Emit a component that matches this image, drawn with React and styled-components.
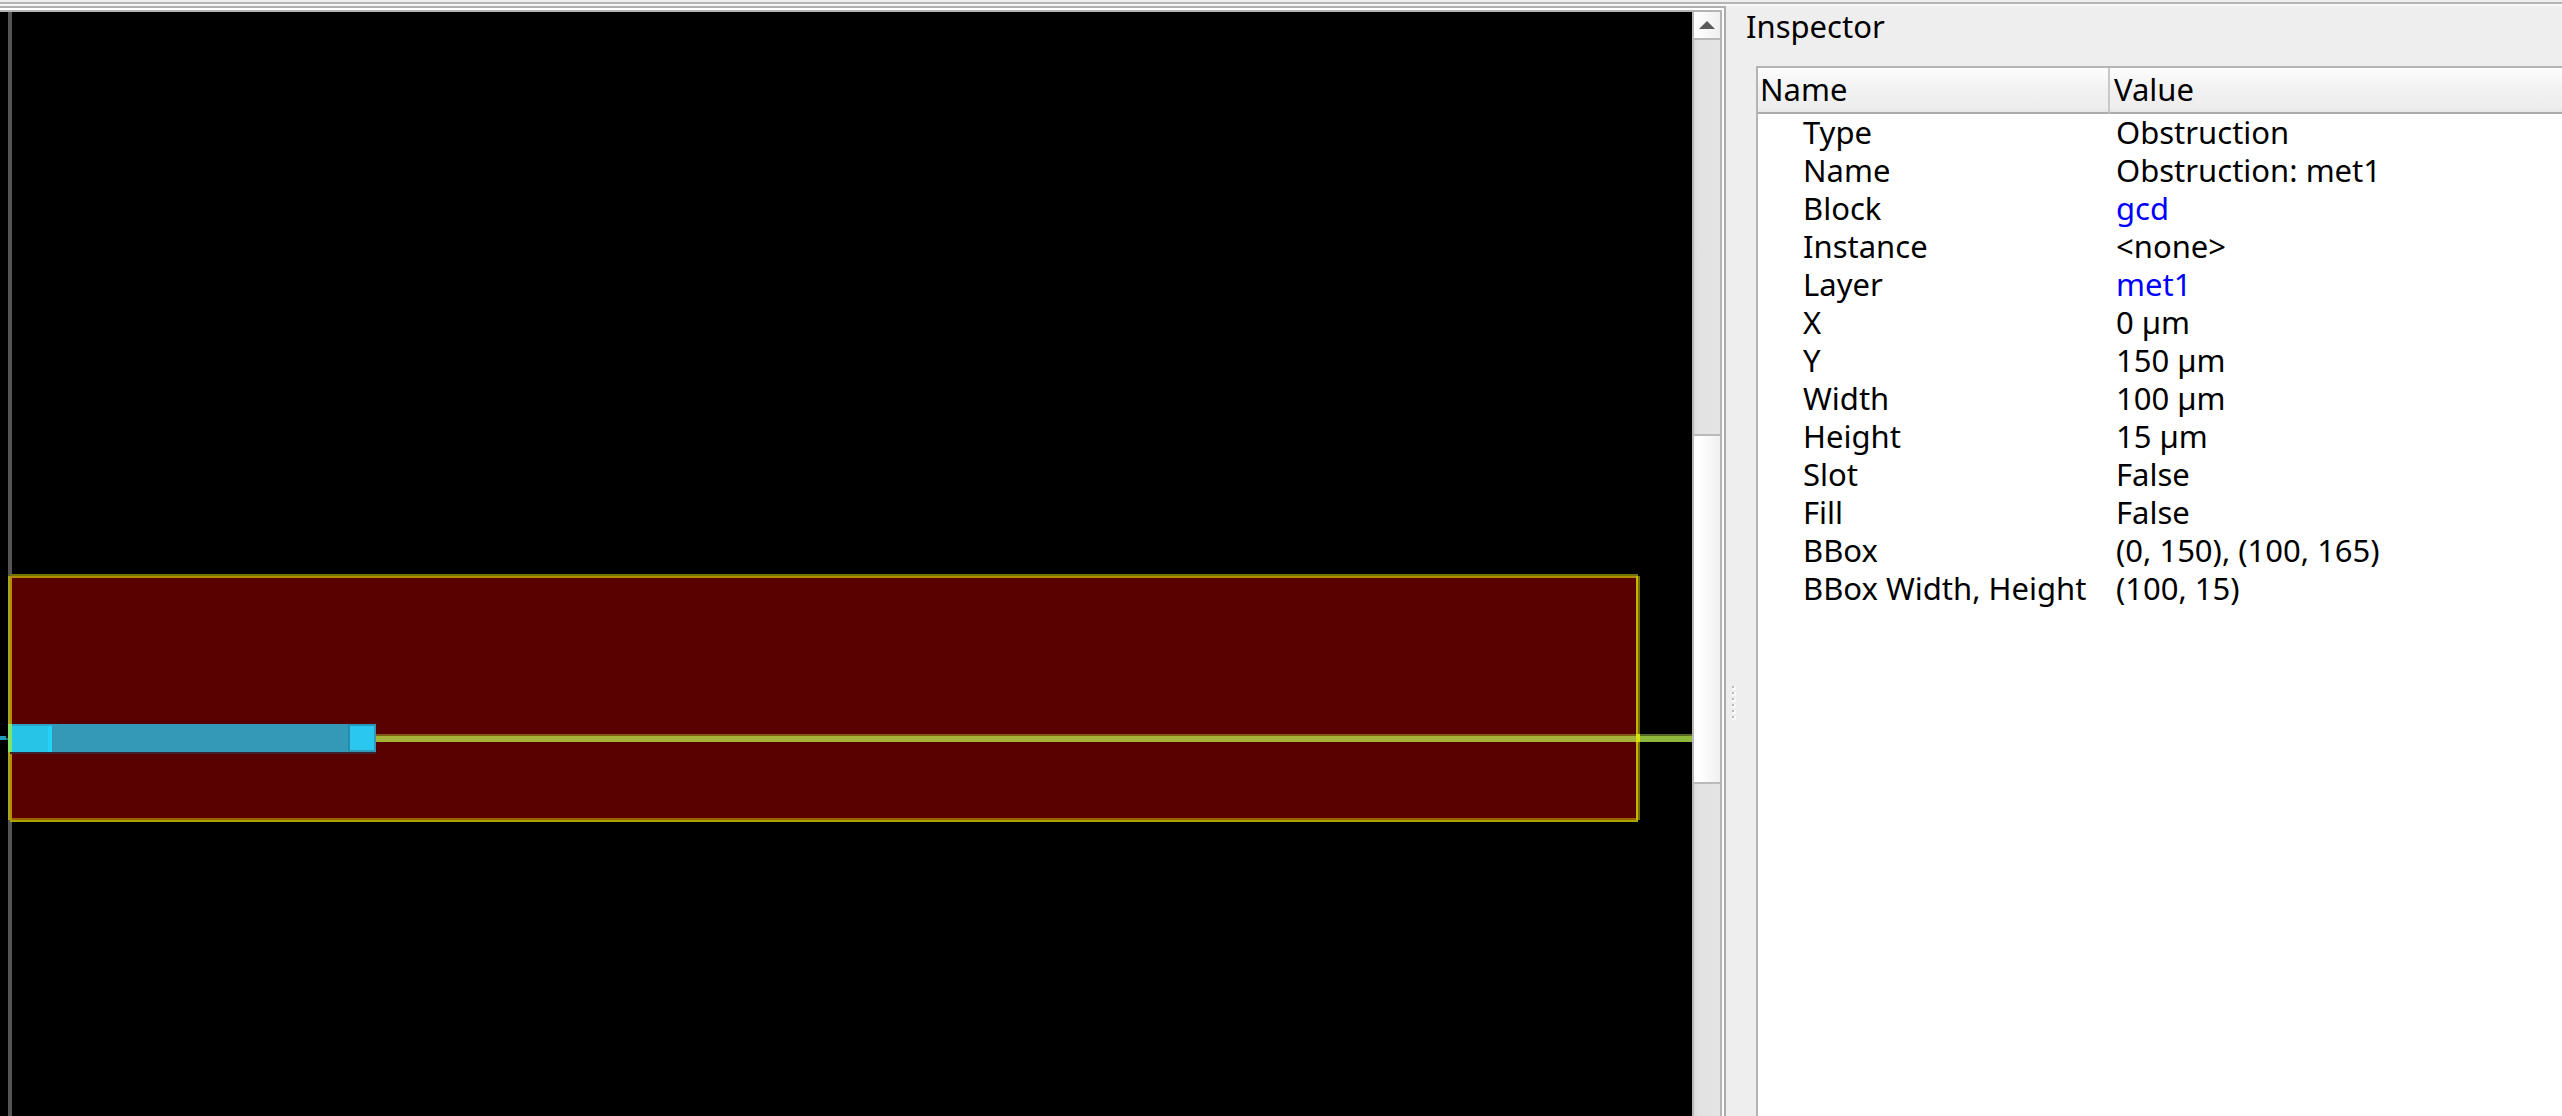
import React from 'react';
import styled, { createGlobalStyle } from 'styled-components';

const GlobalStyle = createGlobalStyle`
  * { box-sizing: border-box; }
  body {
    margin: 0;
    background: #eeeeee;
    color: #000000;
    font-family: "Noto Sans", "Open Sans", sans-serif;
    font-size: 31px;
  }
`;

const Window = styled.div`
  display: flex;
  flex-direction: column;
  height: 100vh;
  overflow: hidden;
`;

const ToolbarEdge = styled.div`
  flex: none;
  height: 6px;
  border-top: 2px solid #eeeeee;
  border-bottom: 2px solid #f7f7f7;
  background: #b4b4b4;
`;

const Workspace = styled.div`
  flex: 1;
  min-height: 0;
  display: grid;
  grid-template-columns: minmax(0, 1726fr) minmax(0, 836fr);
`;

const Viewer = styled.main`
  display: flex;
  border-top: 2px solid #b0b0b0;
  border-right: 2px solid #acacac;
  padding: 2px 2px 0 0;
  background: #ffffff;
`;

const ScrollArea = styled.div`
  flex: 1;
  display: flex;
  min-width: 0;
  border-top: 2px solid #b4b4b4;
  border-right: 2px solid #b4b4b4;
`;

const Canvas = styled.svg`
  display: block;
  flex: 1;
  min-width: 0;
  height: 100%;
  background: #000000;
`;

const ScrollBar = styled.div`
  flex: none;
  width: 28px;
  display: flex;
  flex-direction: column;
  border-left: 2px solid #b8b8b8;
  background: linear-gradient(to right, #dadada 0, #e2e2e2 4px, #e5e5e5 100%);
`;

const ScrollButton = styled.button`
  height: 28px;
  padding: 0;
  border: 0;
  border-bottom: 2px solid #b8b8b8;
  background: linear-gradient(to right, #ffffff, #f0f0f0);
  display: flex;
  align-items: center;
  justify-content: center;
`;

const ScrollThumb = styled.div`
  height: 350px;
  margin-top: 394px;
  border: solid #bababa;
  border-width: 2px 0;
  background: linear-gradient(to right, #ffffff 20%, #f0f0f0);
`;

const Dock = styled.aside`
  display: flex;
  min-width: 0;
`;

const Splitter = styled.div`
  flex: none;
  width: 14px;
  padding: 680px 4px 0 6px;
  display: flex;
  flex-direction: column;
  gap: 2px;
`;

const GripDot = styled.span`
  width: 4px;
  height: 4px;
  border: solid #f8f8f8;
  border-width: 0 2px 2px 0;
  background: #bababa;
`;

const Inspector = styled.section`
  flex: 1;
  min-width: 0;
  display: flex;
  flex-direction: column;
`;

const Title = styled.h1`
  margin: 0 0 20px;
  padding-left: 6px;
  font-size: 31px;
  font-weight: 400;
  line-height: 40px;
`;

const TableFrame = styled.div`
  flex: 1;
  margin-left: 16px;
  border: solid #b4b4b4;
  border-width: 2px 0 0 2px;
  background: #ffffff;
`;

const PropertyTable = styled.table`
  width: 100%;
  table-layout: fixed;
  border-collapse: separate;
  border-spacing: 0;
  text-align: left;
  white-space: nowrap;
`;

const HeaderCell = styled.th`
  width: ${(p) => (p.$first ? '352px' : 'auto')};
  padding: 0 0 2px ${(p) => (p.$first ? '2px' : '4px')};
  border-right: ${(p) => (p.$first ? '2px solid #c8c8c8' : '0')};
  border-bottom: 2px solid #ababab;
  background: linear-gradient(#fdfdfd, #f1f1f1 50%, #eeeeee 90%, #e6e6e6);
  font-weight: 400;
  line-height: 42px;
`;

const NameCell = styled.th`
  padding: 0 0 2px 45px;
  font-weight: 400;
  line-height: 36px;
`;

const ValueCell = styled.td`
  padding: 0 0 2px 6px;
  line-height: 36px;
`;

const ObjectLink = styled.a`
  color: #0000ff;
  text-decoration: none;
`;

const properties = [
  { name: 'Type', value: 'Obstruction' },
  { name: 'Name', value: 'Obstruction: met1' },
  { name: 'Block', value: 'gcd', link: true },
  { name: 'Instance', value: '<none>' },
  { name: 'Layer', value: 'met1', link: true },
  { name: 'X', value: '0 µm' },
  { name: 'Y', value: '150 µm' },
  { name: 'Width', value: '100 µm' },
  { name: 'Height', value: '15 µm' },
  { name: 'Slot', value: 'False' },
  { name: 'Fill', value: 'False' },
  { name: 'BBox', value: '(0, 150), (100, 165)' },
  { name: 'BBox Width, Height', value: '(100, 15)' },
];

function LayoutDrawing() {
  return (
    <Canvas role="img" aria-label="Chip layout" shapeRendering="crispEdges">
      <g transform="translate(0 -12)">
        {/* die boundary */}
        <rect x="8" y="12" width="4" height="3000" fill="#545454" />
        {/* net running past the obstruction */}
        <rect x="1640" y="734" width="3000" height="2" fill="#566a24" />
        <rect x="1640" y="736" width="3000" height="6" fill="#90b83c" />
        {/* obstruction fill */}
        <rect x="10" y="576" width="1628" height="244" fill="#590000" />
        <rect x="376" y="734" width="1260" height="2" fill="#805c14" />
        <rect x="376" y="736" width="1260" height="6" fill="#a6b23a" />
        {/* selection outline */}
        <rect x="10" y="574" width="1628" height="2" fill="#737300" />
        <rect x="10" y="576" width="1628" height="2" fill="#b08c00" />
        <rect x="10" y="818" width="1628" height="2" fill="#9c6000" />
        <rect x="10" y="820" width="1628" height="2" fill="#a8a400" />
        <rect x="8" y="576" width="2" height="244" fill="#a8a820" />
        <rect x="10" y="576" width="2" height="244" fill="#b88a00" />
        <rect x="1636" y="576" width="2" height="244" fill="#c8b400" />
        <rect x="1638" y="576" width="2" height="244" fill="#707000" />
        <rect x="1636" y="734" width="4" height="8" fill="#d8e010" />
        {/* pin shape */}
        <rect x="10" y="752" width="366" height="2" fill="#3e2430" />
        <rect x="10" y="724" width="366" height="28" fill="#3399b6" />
        <rect x="10" y="724" width="42" height="2" fill="#2ca4c4" />
        <rect x="12" y="726" width="38" height="26" fill="#28c4e8" />
        <rect x="48" y="726" width="4" height="26" fill="#22d2fa" />
        <rect x="8" y="724" width="4" height="28" fill="#84e468" />
        <rect x="348" y="724" width="2" height="28" fill="#288cac" />
        <rect x="350" y="726" width="24" height="24" fill="#2ac8f0" />
        <rect x="350" y="724" width="26" height="2" fill="#2498b6" />
        {/* net tail on the left */}
        <rect x="0" y="736" width="6" height="4" fill="#209cba" />
        <rect x="6" y="738" width="2" height="2" fill="#1a6c80" />
      </g>
    </Canvas>
  );
}

export default function App() {
  return (
    <>
      <GlobalStyle />
      <Window>
        <ToolbarEdge />
        <Workspace>
          <Viewer>
            <ScrollArea>
              <LayoutDrawing />
              <ScrollBar>
                <ScrollButton type="button" aria-label="Scroll up">
                  <svg width="16" height="8" viewBox="0 0 16 8" aria-hidden="true">
                    <path d="M8 0 L16 8 H0 Z" fill="#5a5a5a" />
                  </svg>
                </ScrollButton>
                <ScrollThumb />
              </ScrollBar>
            </ScrollArea>
          </Viewer>
          <Dock>
            <Splitter>
              {[0, 1, 2, 3, 4, 5].map((dot) => (
                <GripDot key={dot} />
              ))}
            </Splitter>
            <Inspector>
              <Title>Inspector</Title>
              <TableFrame>
                <PropertyTable>
                  <thead>
                    <tr>
                      <HeaderCell $first scope="col">Name</HeaderCell>
                      <HeaderCell scope="col">Value</HeaderCell>
                    </tr>
                  </thead>
                  <tbody>
                    {properties.map((item) => (
                      <tr key={item.name}>
                        <NameCell scope="row">{item.name}</NameCell>
                        <ValueCell>
                          {item.link ? <ObjectLink href={'#' + item.value}>{item.value}</ObjectLink> : item.value}
                        </ValueCell>
                      </tr>
                    ))}
                  </tbody>
                </PropertyTable>
              </TableFrame>
            </Inspector>
          </Dock>
        </Workspace>
      </Window>
    </>
  );
}
